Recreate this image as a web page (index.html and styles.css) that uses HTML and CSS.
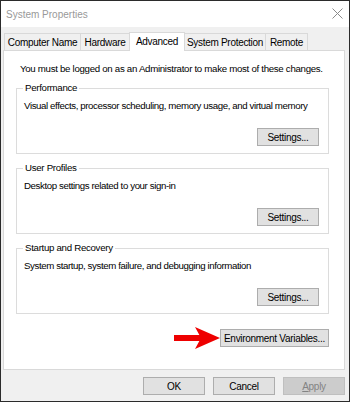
FILE: index.html
```html
<!DOCTYPE html>
<html lang="en">
<head>
    <meta charset="UTF-8">
    <title>System Properties</title>
    <link rel="stylesheet" href="styles.css">
</head>
<body>
    <div class="window">
        <!-- Title bar -->
        <div class="titlebar">
            <span class="title">System Properties</span>
            <svg class="close" width="11" height="11" viewBox="0 0 11 11">
                <path d="M0.5 0.5 L10.5 10.5 M10.5 0.5 L0.5 10.5" stroke="#8a8a8a" stroke-width="1" fill="none"/>
            </svg>
        </div>

        <div class="tabs">
            <div class="tab tab-computer">Computer Name</div>
            <div class="tab tab-hardware">Hardware</div>
            <div class="tab tab-advanced active">Advanced</div>
            <div class="tab tab-protection">System Protection</div>
            <div class="tab tab-remote">Remote</div>
        </div>

        <div class="page">
            <p class="intro">You must be logged on as an Administrator to make most of these changes.</p>

            <div class="group">
                <div class="group-title">Performance</div>
                <p class="group-text">Visual effects, processor scheduling, memory usage, and virtual memory</p>
                <button class="btn btn-settings">Settings...</button>
            </div>

            <div class="group">
                <div class="group-title">User Profiles</div>
                <p class="group-text">Desktop settings related to your sign-in</p>
                <button class="btn btn-settings">Settings...</button>
            </div>

            <div class="group">
                <div class="group-title">Startup and Recovery</div>
                <p class="group-text">System startup, system failure, and debugging information</p>
                <button class="btn btn-settings">Settings...</button>
            </div>

            <div class="env-row">
                <svg class="arrow" width="46" height="22" viewBox="0 0 46 22">
                    <rect x="0" y="8" width="28" height="6" fill="#ee0000"/>
                    <polygon points="21,0 46,11 21,22 27,11" fill="#ee0000"/>
                </svg>
                <button class="btn btn-env">Environment Variables...</button>
            </div>
        </div>

        <div class="footer">
            <button class="btn btn-footer">OK</button>
            <button class="btn btn-footer">Cancel</button>
            <button class="btn btn-footer" disabled><u>A</u>pply</button>
        </div>
    </div>
</body>
</html>
```

FILE: styles.css
```css
body {
    margin: 0;
    font-family: "Liberation Sans", Arial, sans-serif;
    font-size: 10px;
    color: #000;
    background: #fff;
}
.window {
    width: 350px;
    height: 402px;
    box-sizing: border-box;
    border: 1px solid #2b2b2b;
    background: #f0f0f0;
    display: flex;
    flex-direction: column;
}
.titlebar {
    height: 26px;
    flex-shrink: 0;
    background: #fff;
    display: flex;
    align-items: center;
    justify-content: space-between;
    padding: 0 6px 0 5px;
}
.title {
    color: #999;
    font-size: 10px;
}
.close {
    margin-top: -1px;
}
.tabs {
    display: flex;
    align-items: flex-end;
    height: 18px;
    margin: 5px 0 0 3px;
    position: relative;
    z-index: 1;
}
.tab {
    height: 17px;
    box-sizing: border-box;
    border: 1px solid #d9d9d9;
    border-bottom: none;
    margin-right: -1px;
    background: #f0f0f0;
    display: flex;
    align-items: center;
    justify-content: center;
    letter-spacing: -0.3px;
}
.tab-computer { width: 77px; }
.tab-hardware { width: 50px; }
.tab-advanced { width: 56px; }
.tab-protection { width: 82px; }
.tab-remote { width: 43px; }
.tab.active {
    height: 19px;
    margin-bottom: -1px;
    background: #fff;
    padding-bottom: 2px;
}
.page {
    height: 320px;
    box-sizing: border-box;
    margin: 0 4px 0 2px;
    background: #fff;
    border: 1px solid #d9d9d9;
    padding: 11px 15px 0 12px;
    font-size: 9.7px;
    letter-spacing: -0.3px;
}
.intro {
    margin: 0 0 12px 4px;
    line-height: 14px;
    white-space: nowrap;
}
.group {
    height: 66px;
    box-sizing: border-box;
    border: 1px solid #dcdcdc;
    margin-bottom: 14px;
    display: flex;
    flex-direction: column;
    align-items: flex-start;
}
.group-title {
    margin: -7px 0 0 6px;
    padding: 0 2px;
    line-height: 12px;
    background: #fff;
}
.group-text {
    margin: 5px 0 0 7px;
    line-height: 14px;
    white-space: nowrap;
    letter-spacing: -0.4px;
}
.btn {
    font-family: inherit;
    font-size: 10px;
    letter-spacing: -0.3px;
    color: #000;
    background: #e1e1e1;
    border: 1px solid #adadad;
    height: 18px;
    padding: 0;
    border-radius: 0;
}
.btn-settings {
    width: 62px;
    margin: auto 9px 7px auto;
}
.env-row {
    display: flex;
    justify-content: flex-end;
    align-items: center;
    margin-top: -1px;
}
.btn-env {
    width: 109px;
}
.footer {
    display: flex;
    justify-content: flex-end;
    gap: 8px;
    margin: 7px 4px 0 0;
}
.btn-footer {
    width: 62px;
}
.btn-footer:disabled {
    background: #cccccc;
    border-color: #bfbfbf;
    color: #838383;
}
```
